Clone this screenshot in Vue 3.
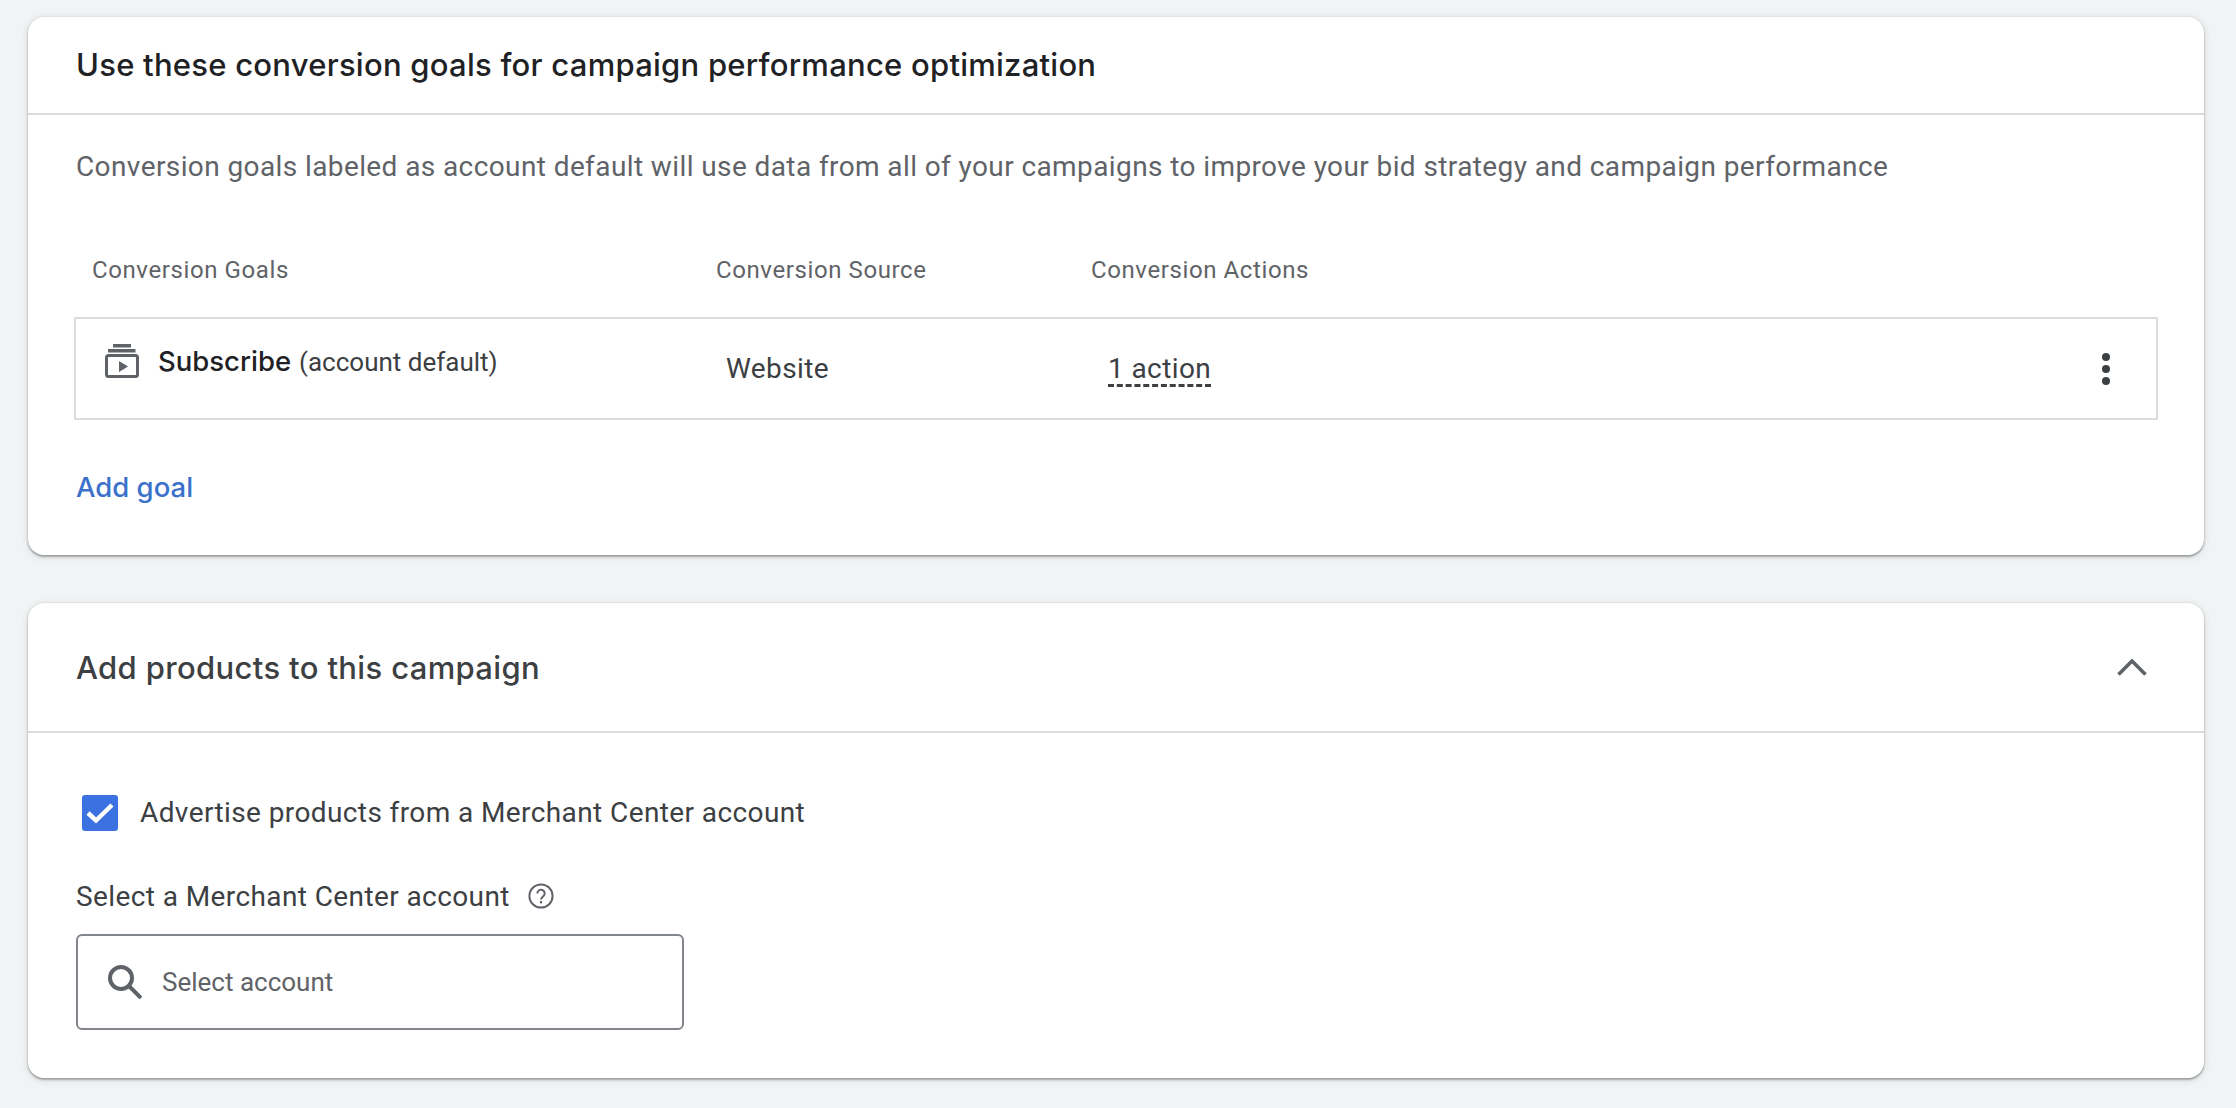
<template>
  <main class="page">
    <section class="card first">
      <h2 class="goals-title">Use these conversion goals for campaign performance optimization</h2>
      <div class="goals-body">
        <p class="desc">Conversion goals labeled as account default will use data from all of your campaigns to improve your bid strategy and campaign performance</p>
        <div class="cols">
          <span class="col-goal">Conversion Goals</span>
          <span class="col-source">Conversion Source</span>
          <span>Conversion Actions</span>
        </div>
        <div class="row">
          <div class="goal">
            <svg class="goal-icon" viewBox="0 0 34 34" aria-hidden="true">
              <rect x="8" y="0" width="18" height="3.500" fill="#5f6368" />
              <rect x="3" y="5" width="27.500" height="3.500" fill="#5f6368" />
              <rect x="1.500" y="11.500" width="31" height="21" rx="2" fill="none" stroke="#5f6368" stroke-width="3" />
              <path d="M14 17v11l9-5.500z" fill="#5f6368" />
            </svg>
            <span class="goal-name">Subscribe</span>
            <span class="goal-note">(account default)</span>
          </div>
          <span class="source">Website</span>
          <span class="action"><span class="action-link">1 action</span></span>
          <svg class="more" viewBox="0 0 8 32" aria-hidden="true">
            <circle cx="4" cy="4" r="4" />
            <circle cx="4" cy="16" r="4" />
            <circle cx="4" cy="28" r="4" />
          </svg>
        </div>
        <a class="add-goal">Add goal</a>
      </div>
    </section>
    <section class="card second">
      <header class="products-head">
        <h2 class="products-title">Add products to this campaign</h2>
        <svg class="chevron" viewBox="0 0 30 18" aria-hidden="true">
          <path d="M1.500 16.500 15 3l13.500 13.500" fill="none" stroke="#5f6368" stroke-width="3.600" />
        </svg>
      </header>
      <div class="products-body">
        <label class="check-row">
          <span class="check">
            <svg viewBox="0 0 36 36" aria-hidden="true">
              <path d="M6 18 14 25.500 30 10" fill="none" stroke="#fff" stroke-width="4.500" />
            </svg>
          </span>
          <span class="check-text">Advertise products from a Merchant Center account</span>
        </label>
        <div class="select-label">
          <span>Select a Merchant Center account</span>
          <svg class="help" viewBox="0 0 26 26" aria-hidden="true">
            <circle cx="13" cy="13" r="11.600" fill="none" stroke="#5f6368" stroke-width="2" />
            <path d="M9.300 10.400a3.700 3.700 0 1 1 5.900 3c-1.300 1-2.200 1.600-2.200 3.200" fill="none" stroke="#5f6368" stroke-width="2" />
            <rect x="11.900" y="18" width="2.200" height="2.400" fill="#5f6368" />
          </svg>
        </div>
        <div class="search">
          <svg class="search-icon" viewBox="0 0 34 34" aria-hidden="true">
            <circle cx="13" cy="13" r="11" fill="none" stroke="#5f6368" stroke-width="4" />
            <path d="m21 21 12 12" fill="none" stroke="#5f6368" stroke-width="4" />
          </svg>
          <span>Select account</span>
        </div>
      </div>
    </section>
  </main>
</template>

<script setup>
</script>

<style>
html,
body {
  margin: 0;
  background: #f1f3f4;
}
</style>

<style scoped>
.page {
  box-sizing: border-box;
  width: 2236px;
  height: 1108px;
  padding: 17px 32px 0 28px;
  background: #f1f3f4;
  font-family: Roboto, "Liberation Sans", sans-serif;
  overflow: hidden;
}
.card {
  background: #fff;
  border-radius: 16px;
  box-shadow: 0 2px 2px rgba(60, 64, 67, 0.38), 0 2px 8px rgba(60, 64, 67, 0.12), 0 0 2px rgba(60, 64, 67, 0.2);
}
.first {
  height: 538px;
  margin-bottom: 48px;
}
.second {
  height: 475px;
}
h2 {
  margin: 0;
  font-family: Inter, Roboto, sans-serif;
  font-weight: 500;
}
.goals-title {
  box-sizing: border-box;
  height: 98px;
  padding: 29px 48px 0 48px;
  border-bottom: 2px solid #dadce0;
  font-size: 31px;
  line-height: 38px;
  letter-spacing: 0.25px;
  color: #202124;
}
.goals-body {
  padding: 0 46px 0 48px;
}
.desc {
  margin: 0;
  padding-top: 32px;
  font-size: 28px;
  line-height: 40px;
  letter-spacing: 0.4px;
  color: #5f6368;
}
.cols {
  display: flex;
  margin-top: 68px;
  padding-left: 16px;
  font-size: 24px;
  line-height: 30px;
  letter-spacing: 0.6px;
  color: #5f6368;
}
.col-goal {
  width: 624px;
}
.col-source {
  width: 375px;
}
.row {
  box-sizing: border-box;
  display: flex;
  align-items: center;
  height: 103px;
  margin-top: 32px;
  margin-left: -2px;
  padding-left: 29px;
  border: 2px solid #dadce0;
  color: #3c4043;
}
.goal {
  display: flex;
  align-items: center;
  width: 621px;
  margin-top: -15px;
}
.goal-icon {
  width: 34px;
  height: 34px;
  margin-right: 19px;
}
.goal-name {
  font-family: Inter, Roboto, sans-serif;
  font-size: 27.500px;
  font-weight: 500;
  color: #202124;
  margin-right: 8px;
}
.goal-note {
  margin-top: 2px;
  font-size: 26px;
}
.source {
  width: 382px;
  font-size: 28px;
  letter-spacing: 0.4px;
}
.action {
  flex: 1;
  font-size: 28px;
  letter-spacing: 0.4px;
}
.action-link {
  display: inline-block;
  line-height: 31px;
  margin-bottom: -3px;
  border-bottom: 3px dashed #3c4043;
}
.more {
  width: 8px;
  height: 32px;
  margin-right: 46px;
  fill: #3c4043;
}
.add-goal {
  display: block;
  margin-top: 48px;
  font-family: Inter, Roboto, sans-serif;
  font-size: 27.500px;
  line-height: 38px;
  font-weight: 500;
  color: #3b71ca;
}
.products-head {
  box-sizing: border-box;
  display: flex;
  align-items: center;
  justify-content: space-between;
  height: 130px;
  padding: 0 57px 0 48px;
  border-bottom: 2px solid #dadce0;
}
.products-title {
  font-size: 31px;
  letter-spacing: 0.35px;
  color: #3c4043;
}
.chevron {
  width: 30px;
  height: 18px;
}
.products-body {
  padding: 0 48px;
  color: #3c4043;
  font-size: 28px;
  letter-spacing: 0.4px;
}
.check-row {
  display: flex;
  align-items: center;
  height: 36px;
  padding-top: 62px;
  padding-left: 6px;
}
.check {
  width: 36px;
  height: 36px;
  margin-right: 22px;
  border-radius: 3px;
  background: #3b71e0;
}
.check svg {
  display: block;
}
.check-text {
  margin-bottom: 2px;
}
.select-label {
  display: flex;
  align-items: center;
  margin-top: 46px;
  height: 38px;
}
.help {
  width: 26px;
  height: 26px;
  margin-left: 18px;
}
.search {
  box-sizing: border-box;
  display: flex;
  align-items: center;
  width: 608px;
  height: 96px;
  margin-top: 19px;
  padding-left: 30px;
  border: 2px solid #80868b;
  border-radius: 6px;
  color: #5f6368;
  font-size: 26px;
  letter-spacing: 0;
}
.search-icon {
  width: 34px;
  height: 34px;
  margin-right: 20px;
}
</style>
